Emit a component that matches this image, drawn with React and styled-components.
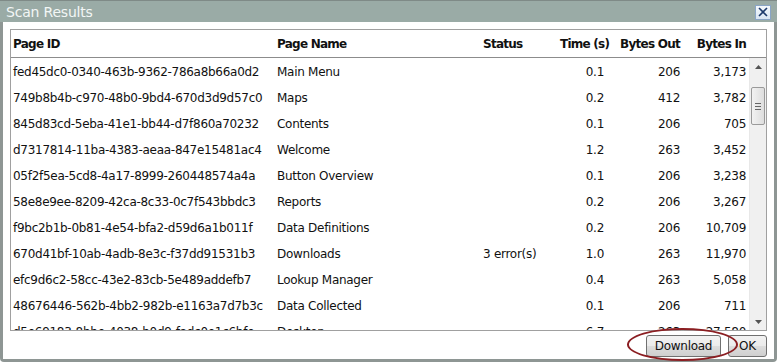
import React from 'react';
import styled, { createGlobalStyle } from 'styled-components';

const GlobalStyle = createGlobalStyle`
  html, body {
    margin: 0;
    padding: 0;
    background: #ffffff;
  }
  body {
    font-family: "DejaVu Sans", Verdana, sans-serif;
    font-size: 12px;
    letter-spacing: -0.28px;
    color: #111;
  }
`;

const Window = styled.div`
  position: relative;
  width: 777px;
  height: 362px;
  box-sizing: border-box;
  background: #8e9694;
  border-radius: 0 0 4px 4px;
  padding: 0 3px 3px 3px;
  display: flex;
  flex-direction: column;
`;

const TitleBar = styled.div`
  height: 22px;
  flex: none;
  background: #9aaba6;
  margin: 0 -3px;
  padding: 0 6px 0 6px;
  border-top: 1px solid #7f8a87;
  box-sizing: border-box;
  display: flex;
  align-items: center;
  justify-content: space-between;
`;

const Title = styled.span`
  font-size: 14px;
  color: #f2f6f5;
  letter-spacing: -0.2px;
`;

const CloseButton = styled.button`
  width: 16px;
  height: 15px;
  padding: 0;
  margin-top: 1px;
  border: 1px solid #8aa5c6;
  background: linear-gradient(#f4f8fc, #d9e5f3);
  display: flex;
  align-items: center;
  justify-content: center;
`;

const Body = styled.div`
  flex: 1;
  background: #ffffff;
  padding: 7px 7px 0 7px;
  display: flex;
  flex-direction: column;
`;

const TableBox = styled.div`
  height: 302px;
  box-sizing: border-box;
  border: 1px solid #a0a0a0;
  display: flex;
  flex-direction: column;
`;

const cols = '264px 206px 79px 46px 76px 66px';

const HeaderRow = styled.div`
  display: grid;
  grid-template-columns: ${cols};
  height: 28px;
  align-items: center;
  border-bottom: 1px solid #8c8c8c;
  font-weight: bold;
  letter-spacing: -0.75px;
  white-space: nowrap;
  flex: none;
  box-sizing: border-box;
  padding-top: 1px;
`;

const ScrollArea = styled.div`
  flex: 1;
  display: flex;
  overflow: hidden;
`;

const Rows = styled.div`
  flex: 1;
  overflow: hidden;
`;

const Row = styled.div`
  display: grid;
  grid-template-columns: ${cols};
  height: 26px;
  box-sizing: border-box;
  padding-top: 2px;
  align-items: center;
  white-space: nowrap;
`;

const Cell = styled.div`
  padding: ${(p) => (p.$right ? '0 2px 0 0' : '0 0 0 2px')};
  text-align: ${(p) => (p.$right ? 'right' : 'left')};
  overflow: ${(p) => (p.$right ? 'visible' : 'hidden')};
`;

const ScrollBar = styled.div`
  width: 16px;
  flex: none;
  background: #f0f0f0;
  border-left: 1px solid #e8e8e8;
  display: flex;
  flex-direction: column;
  align-items: center;
`;

const Arrow = styled.div`
  height: 17px;
  width: 100%;
  display: flex;
  align-items: center;
  justify-content: center;
  flex: none;
`;

const Thumb = styled.div`
  margin-top: 12px;
  width: 14px;
  height: 38px;
  box-sizing: border-box;
  border: 1px solid #9a9a9a;
  border-radius: 2px;
  background: linear-gradient(90deg, #f2f2f2, #dedede);
  display: flex;
  flex-direction: column;
  align-items: center;
  justify-content: center;
  gap: 2px;
`;

const Grip = styled.span`
  width: 6px;
  height: 1px;
  background: #666;
`;

const Track = styled.div`
  flex: 1;
`;

const Footer = styled.div`
  flex: 1;
  display: flex;
  justify-content: flex-end;
  align-items: center;
  gap: 7px;
  padding-top: 1px;
`;

const Button = styled.button`
  height: 22px;
  padding: 0 6px;
  min-width: ${(p) => (p.$wide ? '75px' : '39px')};
  font-family: "DejaVu Sans", Verdana, sans-serif;
  font-size: 12px;
  letter-spacing: -0.28px;
  color: #111;
  border: 1px solid #707070;
  border-radius: 3px;
  background: linear-gradient(#f2f2f2 0%, #ebebeb 50%, #dddddd 51%, #cfcfcf 100%);
`;

const Highlight = styled.div`
  position: absolute;
  left: 627px;
  top: 328px;
  width: 111px;
  height: 33px;
  box-sizing: border-box;
  border: 2px solid #8b1e22;
  border-radius: 50%;
  pointer-events: none;
`;

const data = [
  ['fed45dc0-0340-463b-9362-786a8b66a0d2', 'Main Menu', '', '0.1', '206', '3,173'],
  ['749b8b4b-c970-48b0-9bd4-670d3d9d57c0', 'Maps', '', '0.2', '412', '3,782'],
  ['845d83cd-5eba-41e1-bb44-d7f860a70232', 'Contents', '', '0.1', '206', '705'],
  ['d7317814-11ba-4383-aeaa-847e15481ac4', 'Welcome', '', '1.2', '263', '3,452'],
  ['05f2f5ea-5cd8-4a17-8999-260448574a4a', 'Button Overview', '', '0.1', '206', '3,238'],
  ['58e8e9ee-8209-42ca-8c33-0c7f543bbdc3', 'Reports', '', '0.2', '206', '3,267'],
  ['f9bc2b1b-0b81-4e54-bfa2-d59d6a1b011f', 'Data Definitions', '', '0.2', '206', '10,709'],
  ['670d41bf-10ab-4adb-8e3c-f37dd91531b3', 'Downloads', '3 error(s)', '1.0', '263', '11,970'],
  ['efc9d6c2-58cc-43e2-83cb-5e489addefb7', 'Lookup Manager', '', '0.4', '263', '5,058'],
  ['48676446-562b-4bb2-982b-e1163a7d7b3c', 'Data Collected', '', '0.1', '206', '711'],
  ['d5e69183-8bbe-4038-b0d9-fadc0e1c6bfe', 'Desktop', '', '6.7', '263', '27,580'],
];

const ArrowIcon = ({ down }) => (
  <svg width="7" height="4" viewBox="0 0 7 4">
    <path d={down ? 'M0 0 L7 0 L3.5 4 Z' : 'M0 4 L7 4 L3.5 0 Z'} fill="#555" />
  </svg>
);

export default function App() {
  return (
    <>
      <GlobalStyle />
      <Window>
        <TitleBar>
          <Title>Scan Results</Title>
          <CloseButton>
            <svg width="10" height="10" viewBox="0 0 10 10">
              <path d="M1 1 L9 9 M9 1 L1 9" stroke="#1d3a6b" strokeWidth="1.6" />
            </svg>
          </CloseButton>
        </TitleBar>
        <Body>
          <TableBox>
            <HeaderRow>
              <Cell>Page ID</Cell>
              <Cell>Page Name</Cell>
              <Cell>Status</Cell>
              <Cell $right>Time (s)</Cell>
              <Cell $right>Bytes Out</Cell>
              <Cell $right>Bytes In</Cell>
            </HeaderRow>
            <ScrollArea>
              <Rows>
                {data.map((r) => (
                  <Row key={r[0]}>
                    <Cell>{r[0]}</Cell>
                    <Cell>{r[1]}</Cell>
                    <Cell>{r[2]}</Cell>
                    <Cell $right>{r[3]}</Cell>
                    <Cell $right>{r[4]}</Cell>
                    <Cell $right>{r[5]}</Cell>
                  </Row>
                ))}
              </Rows>
              <ScrollBar>
                <Arrow>
                  <ArrowIcon />
                </Arrow>
                <Thumb>
                  <Grip />
                  <Grip />
                  <Grip />
                </Thumb>
                <Track />
                <Arrow>
                  <ArrowIcon down />
                </Arrow>
              </ScrollBar>
            </ScrollArea>
          </TableBox>
          <Footer>
            <Button $wide>Download</Button>
            <Button>OK</Button>
          </Footer>
        </Body>
        <Highlight />
      </Window>
    </>
  );
}
